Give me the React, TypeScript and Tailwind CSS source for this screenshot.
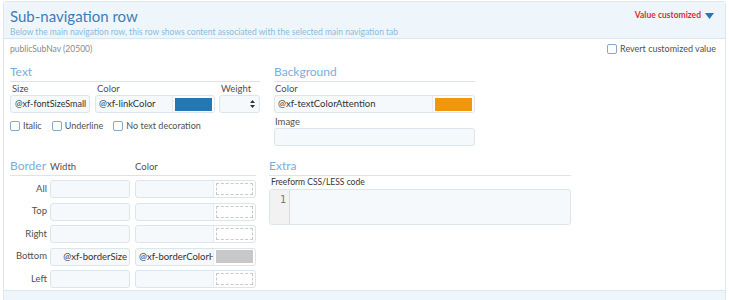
const FONT = { fontFamily: 'Lato, "Open Sans", sans-serif' };

function Check({ label }: { label: string }) {
  return (
    <label className="flex items-center gap-[3px] text-[9px] leading-[12px] text-[#505050]">
      <span className="w-[10px] h-[10px] border border-[#8aa7c4] rounded-[2px] bg-white"></span>
      {label}
    </label>
  );
}

function Heading({ title }: { title: string }) {
  return (
    <div className="border-b border-[#dfe3e8] pb-[1px]">
      <div className="text-[12px] leading-[16px] text-[#7aaddb]">{title}</div>
    </div>
  );
}

function ColorInput({ value, swatch }: { value?: string; swatch?: string }) {
  return (
    <div className="flex h-[18px] border border-[#dde5ec] rounded-[3px] bg-[#f5f9fc]">
      <div className="flex-1 min-w-0 px-[3px] text-[9.5px] leading-[16px] text-[#333] overflow-hidden whitespace-nowrap">
        {value}
      </div>
      <div className="w-[42px] flex items-center justify-center border-l border-[#e6ebef] bg-white rounded-r-[3px]">
        {swatch ? (
          <div className="w-[37px] h-[13px]" style={{ background: swatch }}></div>
        ) : (
          <div className="w-[37px] h-[12px] border border-dashed border-[#c9c9c9]"></div>
        )}
      </div>
    </div>
  );
}

function BorderRow({ label, width, color, swatch }: { label: string; width?: string; color?: string; swatch?: string }) {
  return (
    <div className="flex items-center h-[18px]">
      <div className="w-[37px] text-right text-[9.5px] text-[#505050]">{label}</div>
      <div className="w-[80px] h-[18px] ml-[3px] border border-[#dde5ec] rounded-[3px] bg-[#f5f9fc] text-right pr-[2px] text-[9.5px] leading-[16px] text-[#333] whitespace-nowrap">
        {width}
      </div>
      <div className="w-[121px] ml-[5px]">
        <ColorInput value={color} swatch={swatch} />
      </div>
    </div>
  );
}

export default function App() {
  return (
    <div className="w-[729px] h-[300px] bg-white overflow-hidden" style={FONT}>
      <div className="ml-[3px] mt-px w-[723px] border border-[#dfe6ec] rounded-t-[3px]">
        <div className="bg-[#eef6fc] border-b border-[#dbe6ef] h-[37px] px-[6px] pt-[5px] flex justify-between">
          <div>
            <div className="text-[15px] leading-[19px] text-[#3f7db3]">Sub-navigation row</div>
            <div className="text-[8.5px] leading-[11px] text-[#8ebad9] mt-[1px]">
              Below the main navigation row, this row shows content associated with the selected main navigation tab
            </div>
          </div>
          <div className="flex items-center gap-[4px] h-[17px] pr-[5px]">
            <span className="text-[8.5px] font-bold text-[#dc2f2f]">Value customized</span>
            <svg width="9" height="6" viewBox="0 0 9 6">
              <path d="M0 0 L9 0 L4.5 6 Z" fill="#2577b1" />
            </svg>
          </div>
        </div>
        <div className="px-[6px] pt-[3px] h-[251px]">
          <div className="flex justify-between items-center h-[14px]">
            <div className="text-[8.5px] text-[#8a8a8a]">publicSubNav (20500)</div>
            <div className="pr-[3px]">
              <Check label="Revert customized value" />
            </div>
          </div>

          <div className="flex gap-[14px] mt-[8px] items-start">
            <div className="w-[250px]">
              <Heading title="Text" />
              <div className="flex gap-[5px]">
                <div className="w-[80px]">
                  <div className="text-[9.5px] leading-[13px] text-[#505050] pl-[2px]">Size</div>
                  <div className="h-[18px] border border-[#dde5ec] rounded-[3px] bg-[#f5f9fc] pl-[4px] text-[9px] leading-[16px] text-[#333] whitespace-nowrap">
                    @xf-fontSizeSmall
                  </div>
                </div>
                <div className="w-[120px]">
                  <div className="text-[9.5px] leading-[13px] text-[#505050] pl-[2px]">Color</div>
                  <ColorInput value="@xf-linkColor" swatch="#2577b1" />
                </div>
                <div className="w-[41px] ml-[-1px]">
                  <div className="text-[9.5px] leading-[13px] text-[#505050] pl-[2px]">Weight</div>
                  <div className="h-[18px] border border-[#dde5ec] rounded-[3px] bg-[#f5f9fc] flex items-center justify-end pr-[4px]">
                    <svg width="5" height="8" viewBox="0 0 5 8">
                      <path d="M0 3 L2.5 0 L5 3 Z M0 5 L2.5 8 L5 5 Z" fill="#333" />
                    </svg>
                  </div>
                </div>
              </div>
              <div className="flex gap-[10px] mt-[7px]">
                <Check label="Italic" />
                <Check label="Underline" />
                <Check label="No text decoration" />
              </div>
            </div>
            <div className="w-[201px]">
              <Heading title="Background" />
              <div className="text-[9.5px] leading-[13px] text-[#505050] pl-[1px]">Color</div>
              <ColorInput value="@xf-textColorAttention" swatch="#f0960f" />
              <div className="text-[9.5px] leading-[13px] text-[#505050] pl-[1px] mt-[2px]">Image</div>
              <div className="h-[18px] border border-[#dde5ec] rounded-[3px] bg-[#f5f9fc]"></div>
            </div>
          </div>

          <div className="flex gap-[13px] mt-[12px]">
            <div className="w-[246px]">
              <div className="flex items-end border-b border-[#dfe3e8] pb-[1px]">
                <div className="text-[12px] leading-[16px] text-[#7aaddb] w-[40px] whitespace-nowrap">Border</div>
                <div className="text-[9.5px] leading-[14px] text-[#505050] w-[85px]">Width</div>
                <div className="text-[9.5px] leading-[14px] text-[#505050]">Color</div>
              </div>
              <div className="flex flex-col gap-[4.5px] mt-[4px]">
                <BorderRow label="All" />
                <BorderRow label="Top" />
                <BorderRow label="Right" />
                <BorderRow label="Bottom" width="@xf-borderSize" color="@xf-borderColorHeavy" swatch="#c8c8c8" />
                <BorderRow label="Left" />
              </div>
            </div>
            <div className="w-[302px]">
              <Heading title="Extra" />
              <div className="text-[8.5px] leading-[13px] text-[#333] pl-[2px]">Freeform CSS/LESS code</div>
              <div className="flex h-[36px] border border-[#dde5ec] rounded-[3px] bg-[#f5f9fc] overflow-hidden">
                <div className="w-[20px] bg-[#f2f2f2] border-r border-[#dcdcdc] text-right pr-[3px] pt-[4px] text-[10px] leading-[12px] text-[#777]" style={{ fontFamily: '"DejaVu Sans Mono", monospace' }}>
                  1
                </div>
                <div className="flex-1"></div>
              </div>
            </div>
          </div>
        </div>
        <div className="bg-[#eef6fc] border-t border-[#dbe6ef] h-[10px]"></div>
      </div>
    </div>
  );
}
